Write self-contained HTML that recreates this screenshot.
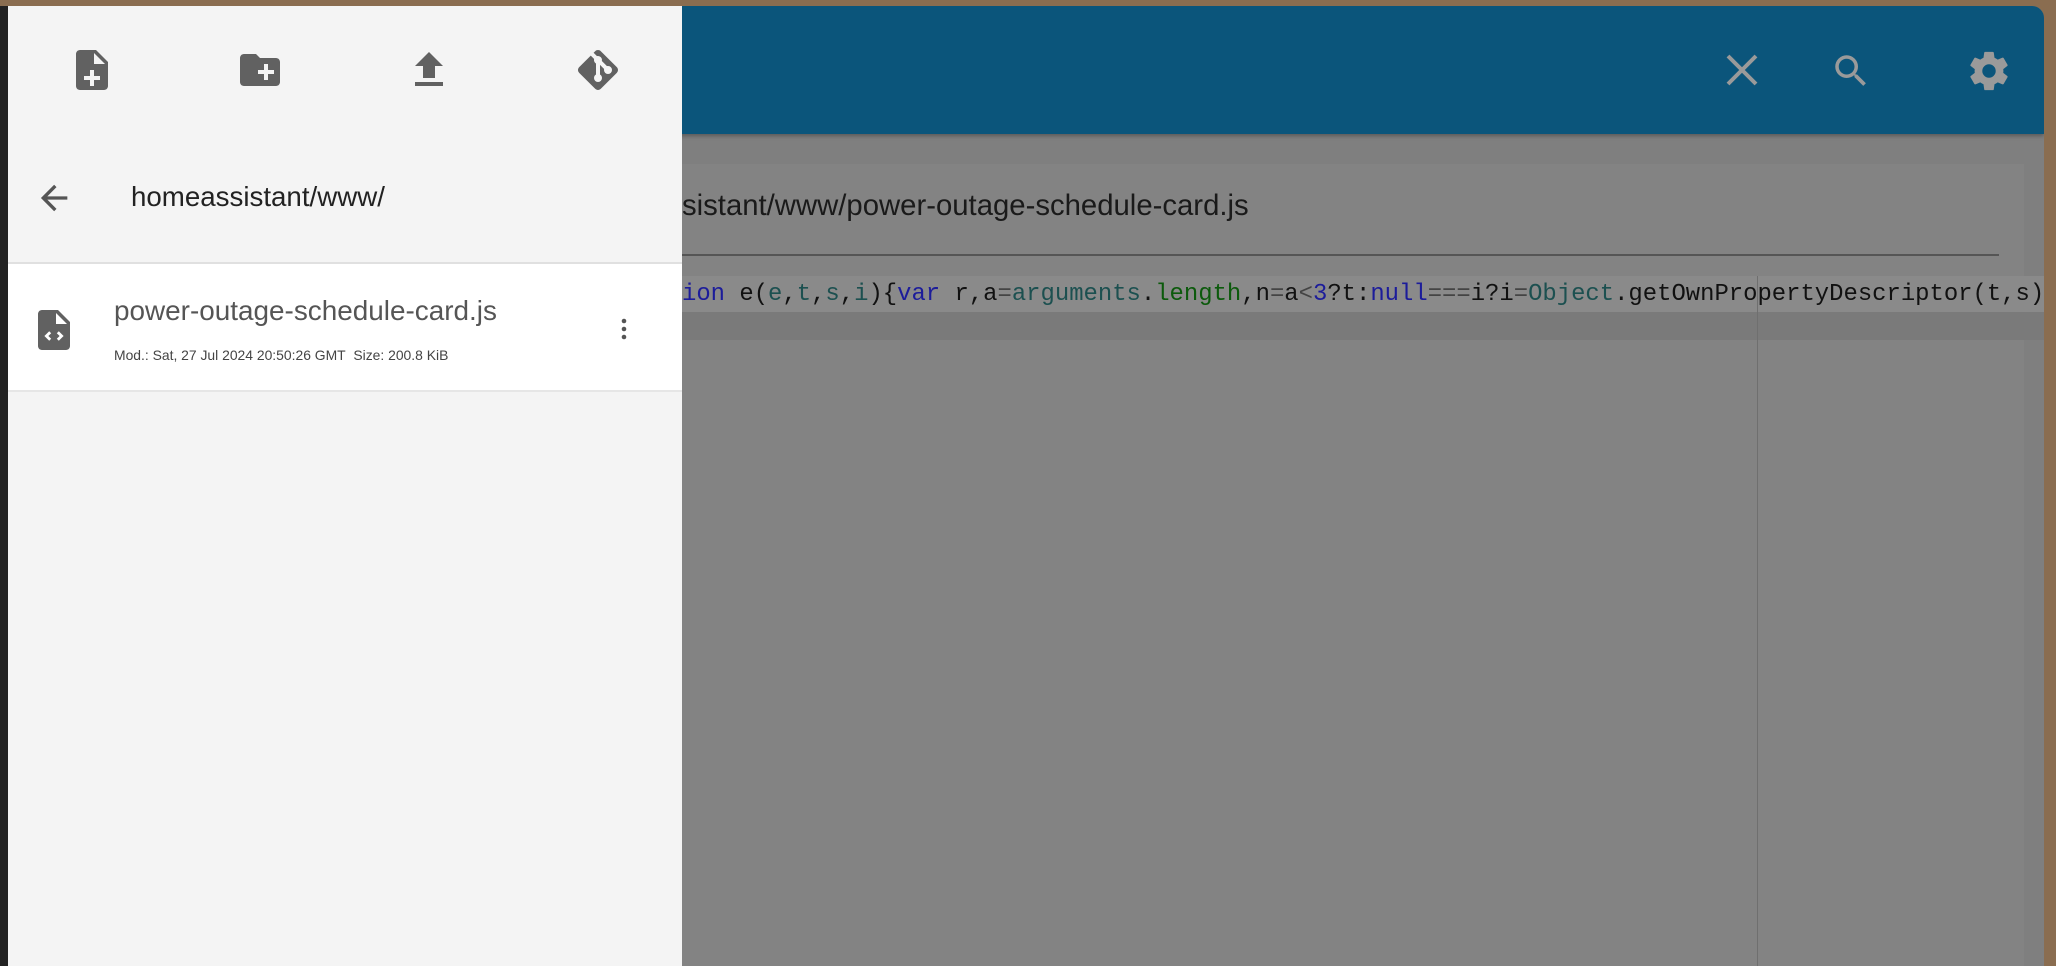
<!DOCTYPE html><html><head><style>
*{margin:0;padding:0;box-sizing:border-box}
body{width:2056px;height:966px;overflow:hidden;background:#8a6d50;position:relative;font-family:"Liberation Sans",sans-serif}
#win{position:absolute;left:0;top:6px;width:2044px;height:960px;background:#7f7f7f;border-top-right-radius:12px;overflow:hidden}
#hdr{position:absolute;left:0;top:0;width:100%;height:128px;background:#0b557b;box-shadow:0 2px 4px rgba(0,0,0,.3)}
#card{position:absolute;left:600px;top:158px;width:1424px;height:840px;background:#838383}
#ttl{position:absolute;left:682px;top:189px;font-size:29.3px;color:#1a1a1a;white-space:nowrap}
#uline{position:absolute;left:600px;top:248px;width:1399px;height:2px;background:#555}
#band1{position:absolute;left:600px;top:270px;width:1444px;height:36px;background:#8a8a8a}
#band2{position:absolute;left:600px;top:306px;width:1444px;height:28px;background:#7a7a7a}
#vline{position:absolute;left:1757px;top:270px;width:1px;height:700px;background:#6f6f6f}
#code{position:absolute;left:682px;top:281px;font-family:"Liberation Mono",monospace;font-size:23.9px;white-space:nowrap;color:#111;letter-spacing:0}
.k{color:#1c1c9a}.v{color:#1c5050}.g{color:#0c5a0c}.o{color:#444}
#drawer{position:absolute;left:8px;top:6px;width:674px;height:960px;background:#f4f4f4}
#strip{position:absolute;left:0;top:6px;width:8px;height:960px;background:#222}
.ic{position:absolute;fill:#616161}
#path{position:absolute;left:131px;top:181px;font-size:27.7px;color:#222}
#item{position:absolute;left:8px;top:262px;width:674px;height:130px;background:#fff;border-top:2px solid #e0e0e0;border-bottom:2px solid #e6e6e6}
#fn{position:absolute;left:106px;top:31px;font-size:27.9px;color:#555}
#meta{position:absolute;left:106px;top:83px;font-size:13.9px;color:#444}
</style></head><body>
<div id="win">
<div id="hdr">
<svg class="ic" style="left:1724px;top:46px;fill:none;stroke:#9a9a9a;stroke-width:4" width="36" height="36" viewBox="0 0 36 36"><path d="M4 4L32 32M32 4L4 32"/></svg>
<svg style="position:absolute;left:1830px;top:44px" width="42" height="42" viewBox="0 0 24 24"><path fill="#9a9a9a" d="M9.5 3A6.5 6.5 0 0 1 16 9.5c0 1.610-.59 3.09-1.56 4.23l.27.27h.79l5 5-1.5 1.5-5-5v-.79l-.27-.27A6.52 6.52 0 0 1 9.5 16 6.5 6.5 0 0 1 3 9.5 6.5 6.5 0 0 1 9.5 3m0 2C7 5 5 7 5 9.5S7 14 9.5 14 14 12 14 9.5 12 5 9.5 5z"/></svg>
<svg style="position:absolute;left:1966px;top:42px" width="46" height="46" viewBox="0 0 24 24"><path fill="#9a9a9a" d="M12 15.5A3.5 3.5 0 0 1 8.5 12 3.5 3.5 0 0 1 12 8.5a3.5 3.5 0 0 1 3.5 3.5 3.5 3.5 0 0 1-3.5 3.5m7.43-2.53c.04-.32.07-.64.07-.97s-.03-.66-.07-1l2.11-1.630c.19-.15.24-.42.12-.64l-2-3.46c-.12-.22-.39-.31-.61-.22l-2.49 1c-.52-.39-1.06-.73-1.69-.98l-.37-2.65A.506.506 0 0 0 14 2h-4c-.25 0-.46.18-.5.42l-.37 2.65c-.63.25-1.170.59-1.69.98l-2.49-1c-.22-.09-.49 0-.61.22l-2 3.46c-.13.22-.07.49.12.64L4.57 11c-.04.34-.07.67-.07 1s.03.65.07.97l-2.11 1.66c-.19.15-.25.42-.12.64l2 3.46c.12.22.39.3.61.22l2.49-1.01c.52.4 1.06.74 1.690.99l.37 2.65c.04.24.25.42.5.42h4c.25 0 .46-.18.5-.42l.37-2.65c.63-.26 1.17-.59 1.69-.99l2.49 1.01c.22.08.49 0 .61-.22l2-3.46c.12-.22.07-.49-.12-.64l-2.11-1.66z"/></svg>
</div>
<div id="card"></div>
<div id="uline"></div>
<div id="band1"></div><div id="band2"></div><div id="vline"></div>
</div>
<div id="ttl">sistant/www/power-outage-schedule-card.js</div>
<div id="code"><span class="k">ion</span> e(<span class="v">e</span>,<span class="v">t</span>,<span class="v">s</span>,<span class="v">i</span>){<span class="k">var</span> r,a<span class="o">=</span><span class="v">arguments</span>.<span class="g">length</span>,n<span class="o">=</span>a<span class="o">&lt;</span><span class="k">3</span>?t:<span class="k">null</span><span class="o">===</span>i?i<span class="o">=</span><span class="v">Object</span>.getOwnPropertyDescriptor(t,s)</div>
<div id="strip"></div>
<div id="drawer"></div>
<svg class="ic" style="left:68px;top:46px" width="48" height="48" viewBox="0 0 24 24"><path d="M14 2H6c-1.1 0-2 .9-2 2v16c0 1.1.9 2 2 2h12c1.1 0 2-.9 2-2V8l-6-6zm-1 7V3.5L18.5 9H13zm-2 3h2v3h3v2h-3v3h-2v-3H8v-2h3v-3z"/></svg>
<svg class="ic" style="left:236px;top:46px" width="48" height="48" viewBox="0 0 24 24"><path d="M20 6h-8l-2-2H4c-1.1 0-2 .9-2 2v12c0 1.1.9 2 2 2h16c1.1 0 2-.9 2-2V8c0-1.1-.9-2-2-2zm-1 8h-3v3h-2v-3h-3v-2h3V9h2v3h3v2z"/></svg>
<svg class="ic" style="left:405px;top:46px" width="48" height="48" viewBox="0 0 24 24"><path d="M9 16h6v-6h4l-7-7-7 7h4v6zm-4 2h14v2H5v-2z"/></svg>
<svg class="ic" style="left:574px;top:46px" width="48" height="48" viewBox="0 0 24 24"><path d="M2.6 10.59L8.38 4.8l1.69 1.7c-.24.85.15 1.78.93 2.23v5.54c-.6.34-1 .99-1 1.73a2 2 0 0 0 2 2 2 2 0 0 0 2-2c0-.74-.4-1.39-1-1.73V9.41l2.07 2.09c-.07.15-.07.32-.07.5a2 2 0 0 0 2 2 2 2 0 0 0 2-2 2 2 0 0 0-2-2c-.18 0-.35 0-.5.07L13.93 7.5a1.98 1.98 0 0 0-1.15-2.34c-.43-.16-.88-.2-1.28-.09L9.8 3.38l.79-.78c.78-.79 2.04-.79 2.82 0l7.99 7.99c.79.78.79 2.040 0 2.82l-7.99 7.99c-.78.79-2.04.79-2.82 0L2.6 13.41c-.79-.78-.79-2.04 0-2.82z"/></svg>
<svg style="position:absolute;left:34px;top:178px" width="40" height="40" viewBox="0 0 24 24"><path fill="#555" d="M20 11v2H8l5.5 5.5-1.42 1.42L4.16 12l7.92-7.92L13.5 5.5 8 11h12z"/></svg>
<div id="path">homeassistant/www/</div>
<div id="item">
<svg class="ic" style="left:22px;top:42px" width="48" height="48" viewBox="0 0 24 24"><path d="M14 2H6c-1.1 0-2 .9-2 2v16c0 1.1.9 2 2 2h12c1.1 0 2-.9 2-2V8l-6-6zm-1 7V3.5L18.5 9H13zM9.6 17.4L7.2 15l2.4-2.4 1 1L9.2 15l1.4 1.4-1 1zm4.8 0l-1-1 1.4-1.4-1.4-1.4 1-1 2.4 2.4-2.4 2.4z"/></svg>
<div id="fn">power-outage-schedule-card.js</div>
<div id="meta">Mod.: Sat, 27 Jul 2024 20:50:26 GMT&nbsp; Size: 200.8 KiB</div>
<svg style="position:absolute;left:611px;top:54px" width="10" height="22" viewBox="0 0 10 22"><circle cx="5" cy="3" r="2.3" fill="#555"/><circle cx="5" cy="11" r="2.3" fill="#555"/><circle cx="5" cy="19" r="2.3" fill="#555"/></svg>
</div>
</body></html>
